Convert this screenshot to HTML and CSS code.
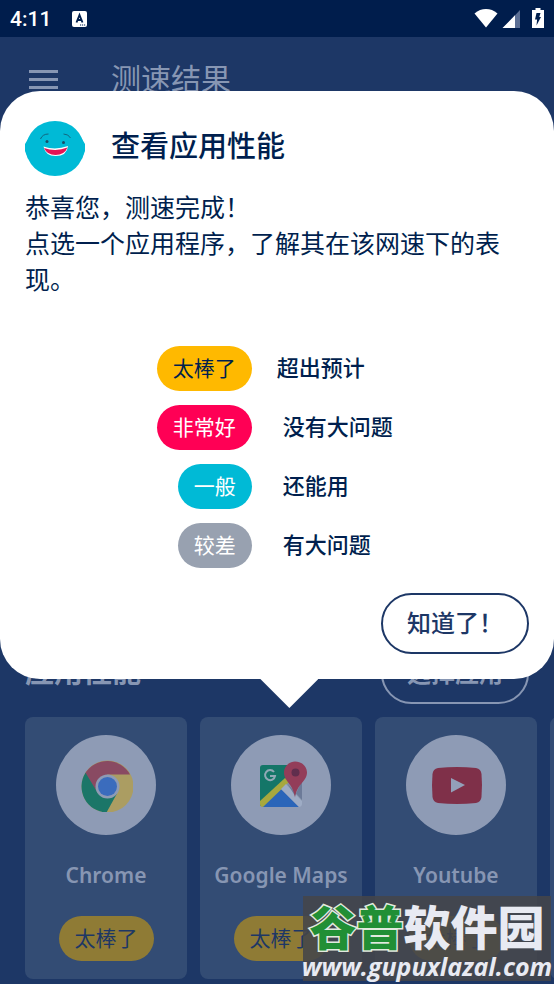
FILE: index.html
```html
<!DOCTYPE html>
<html lang="zh-CN">
<head>
<meta charset="utf-8">
<meta name="viewport" content="width=device-width, initial-scale=1">
<title>测速结果</title>
<link rel="stylesheet" href="styles.css">
</head>
<body>
<div class="status-bar">
  <span class="clock">4:11</span>
  <svg class="status-app" viewBox="0 0 15 16" width="15" height="16" aria-hidden="true">
    <rect width="15" height="16" rx="2" fill="#fff"/>
    <path d="M4.500 11.500 7.500 4l3 7.500M5.600 9h3.800" fill="none" stroke="#001f4e" stroke-width="1.900"/>
    <path d="M8 14h1.200M10 14h1.200M12 14h1.200" stroke="#001f4e" stroke-width="1"/>
  </svg>
  <svg class="status-icons" viewBox="0 0 70 21" width="70" height="21" aria-hidden="true">
    <path d="M.5 5.500C4 2.200 8 1 12 1s8 1.200 11.500 4.500L12 19.500z" fill="#fff"/>
    <path d="M46 2v18H29z" fill="#5c6f94"/>
    <path d="M41 7.300V20H28.500z" fill="#fff"/>
    <path d="M61.500 0h5v2H70v18H58V2h3.500z" fill="#fff"/>
    <path d="M62.500 5h4l-1.200 4H67l-4.500 8.500.6-6H61z" fill="#001f4e"/>
  </svg>
</div>

<div class="app">
  <header class="app-bar">
    <button class="menu" type="button" aria-label="菜单">
      <svg viewBox="0 0 30 22" width="30" height="22" aria-hidden="true"><path d="M1 3.500h29M1 11.500h29M1 19.500h29" stroke="#8796b3" stroke-width="3"/></svg>
    </button>
    <h1 class="app-title">测速结果</h1>
  </header>

  <section class="apps">
    <div class="apps-head">
      <h2 class="apps-title">应用性能</h2>
      <button class="outline-button outline-button-dim" type="button">选择应用</button>
    </div>
    <ul class="cards">
      <li class="card">
        <span class="logo">
          <svg viewBox="-1.500 -1.500 54 54" width="54" height="54" aria-hidden="true">
            <circle cx="27" cy="27" r="26" fill="#ab9d62"/>
            <path d="M4.500 14A26 26 0 0 1 49.500 15H27L16.600 33z" fill="#894a62"/>
            <path d="M5 13.200A26 26 0 0 0 26 53L36.500 34 17 33z" fill="#1b7668"/>
            <circle cx="27" cy="27" r="12" fill="#8e9bb5"/>
            <circle cx="27" cy="27" r="9.500" fill="#3b6cbd"/>
          </svg>
        </span>
        <span class="card-name">Chrome</span>
        <span class="pill pill-dim">太棒了</span>
      </li>
      <li class="card">
        <span class="logo">
          <svg viewBox="0 0 54 54" width="54" height="54" aria-hidden="true">
            <rect x="6" y="7" width="42" height="42" rx="3" fill="#8693aa"/>
            <path d="M9 7h28v12L6 48V10a3 3 0 0 1 3-3z" fill="#147668"/>
            <path d="m8 48 19-17 18 18H9z" fill="#2a65b9"/>
            <path d="M6 43 31 20l5 3L9 49Q6 49 6 46z" fill="#a7a83e"/>
            <path d="m27 31 5-5 16 17v3q0 3-3 3z" fill="#9eacc5"/>
            <path d="m33 25 8 13 7-16v20z" fill="#6c7a98"/>
            <path d="M41 3.500c-6 0-11 5-11 11 0 9 9 11 11 25 2-14 12-16 12-25 0-6-5-11-12-11z" fill="#933d59"/>
            <circle cx="41.500" cy="14.500" r="4" fill="#602e4d"/>
            <path d="M20 14a5 5 0 1 0 1 4h-5" fill="none" stroke="#91a9b6" stroke-width="2"/>
          </svg>
        </span>
        <span class="card-name">Google Maps</span>
        <span class="pill pill-dim">太棒了</span>
      </li>
      <li class="card">
        <span class="logo">
          <svg viewBox="-1 -1 54 54" width="54" height="54" aria-hidden="true">
            <path d="M8 9q19-2 38 0 5 1 5.500 6 1 11 0 23-.5 5-5.500 6-19 2-38 0-5-1-5.500-6-1-12 0-23 .5-5 5.500-6z" fill="#7f3049"/>
            <path d="m21 19 14 7-14 7.500z" fill="#93a0b9"/>
          </svg>
        </span>
        <span class="card-name">Youtube</span>
        <span class="pill pill-dim">太棒了</span>
      </li>
      <li class="card"></li>
    </ul>
  </section>

  <div class="dialog" role="dialog" aria-labelledby="dialog-title">
    <div class="dialog-head">
      <svg viewBox="0 0 60 55" width="60" height="55" aria-hidden="true">
        <ellipse cx="30" cy="27.500" rx="29" ry="27.500" fill="#00bad6"/>
        <path d="M3 18 0 23v7l3 8h54l3-8v-7l-3-5z" fill="#00bad6"/>
        <path d="M15.500 18q2-5 8-5M38.500 13q5 0 7 4" fill="none" stroke="#12677f" stroke-width="1"/>
        <circle cx="22" cy="20.500" r="1.500" fill="#174e69"/>
        <circle cx="38.500" cy="21.500" r="1.500" fill="#174e69"/>
        <path d="M18.500 25.500q12 4 24.500-.5-1 10-12.500 10-10 0-12-9.500z" fill="#fff"/>
        <path d="M19 27q12 4 23.500-.5-3 7.500-12 7.500-8.500 0-11.500-7z" fill="#e71354"/>
      </svg>
      <h2 class="dialog-title" id="dialog-title">查看应用性能</h2>
    </div>
    <p class="dialog-text">恭喜您，测速完成！<br>点选一个应用程序，了解其在该网速下的表现。</p>
    <dl class="legend">
      <dt class="pill pill-great">太棒了</dt><dd class="meaning meaning-wide">超出预计</dd>
      <dt class="pill pill-good">非常好</dt><dd class="meaning">没有大问题</dd>
      <dt class="pill pill-fair">一般</dt><dd class="meaning">还能用</dd>
      <dt class="pill pill-poor">较差</dt><dd class="meaning">有大问题</dd>
    </dl>
    <button class="outline-button" type="button">知道了！</button>
  </div>
</div>

<div class="watermark">
  <span class="mark-name"><span class="mark-green">谷普</span>软件园</span>
  <span class="mark-url">www.gupuxlazal.com</span>
</div>
</body>
</html>
```

FILE: styles.css
```css
* {
  box-sizing: border-box;
}

body {
  position: relative;
  display: flex;
  flex-direction: column;
  min-height: 100vh;
  margin: 0;
  overflow-x: hidden;
  background: #1d3766;
  color: #001f4e;
  font-family: "Noto Sans", "Noto Sans CJK SC", sans-serif;
}

h1, h2, p, ul, dl, dd {
  margin: 0;
  padding: 0;
}

button {
  font-family: inherit;
  background: none;
}

.status-bar {
  display: flex;
  align-items: center;
  height: 37px;
  padding: 0 10px;
  background: #001d4c;
  color: #fff;
}

.clock {
  font: 500 21px/25px Roboto, sans-serif;
  padding-top: 2px;
}

.status-app {
  margin-left: 21px;
}

.status-icons {
  margin-left: auto;
}

.app {
  position: relative;
  display: flex;
  flex: 1;
  flex-direction: column;
  justify-content: space-between;
}

.app-bar {
  display: flex;
  align-items: center;
  gap: 53px;
  height: 84px;
  padding: 0 28px;
}

.menu {
  display: flex;
  padding: 0;
  border: 0;
}

.app-title {
  color: #8796b3;
  font-size: 30px;
  font-weight: 400;
  line-height: 40px;
}

.apps {
  padding: 0 0 5px 25px;
  overflow: hidden;
}

.apps-head {
  display: flex;
  align-items: flex-start;
  justify-content: space-between;
  margin-bottom: 13px;
  padding-right: 25px;
}

.apps-title {
  color: #8796b3;
  font-size: 29px;
  font-weight: 700;
  line-height: 58px;
}

.outline-button {
  height: 61px;
  padding: 0 24px 4px;
  border: 2px solid #1d3766;
  border-radius: 31px;
  color: #1d3766;
  font-size: 24px;
  font-weight: 500;
}

.outline-button-dim {
  border-color: #8796b3;
  color: #8796b3;
  font-weight: 700;
}

.cards {
  display: flex;
  gap: 13px;
  list-style: none;
}

.card {
  display: flex;
  flex: 0 0 162px;
  flex-direction: column;
  align-items: center;
  padding: 18px 0;
  border-radius: 8px;
  background: #334c74;
}

.logo {
  display: flex;
  align-items: center;
  justify-content: center;
  width: 100px;
  height: 100px;
  border-radius: 50%;
  background: #8e9bb5;
}

.card-name {
  margin: 25px 0;
  color: #8796b3;
  font-size: 21px;
  font-weight: 600;
  line-height: 31px;
}

.pill {
  padding: 0 16px;
  border-radius: 23px;
  color: #fff;
  font-size: 21px;
  line-height: 45px;
}

.pill-dim {
  background: #8f7b35;
  color: #1d3766;
}

.pill-great {
  background: #ffb900;
  color: #001f4e;
}

.pill-good {
  background: #ff0055;
}

.pill-fair {
  background: #00bad6;
}

.pill-poor {
  background: #98a1b0;
}

.dialog {
  position: absolute;
  top: 54px;
  right: 0;
  left: 0;
  display: flex;
  flex-direction: column;
  padding: 30px 25px 25px;
  border-radius: 40px;
  background: #fff;
}

.dialog::after {
  position: absolute;
  top: 100%;
  left: 47%;
  width: 58px;
  height: 29px;
  background: #fff;
  clip-path: polygon(0 0, 100% 0, 50% 100%);
  content: "";
}

.dialog-head {
  display: flex;
  align-items: flex-start;
  gap: 26px;
}

.dialog-title {
  font-size: 29px;
  font-weight: 500;
  line-height: 50px;
}

.dialog-text {
  margin-top: 13px;
  padding-right: 24px;
  font-size: 25px;
  line-height: 36px;
}

.legend {
  display: grid;
  grid-template-columns: 45% 1fr;
  row-gap: 14px;
  margin: 49px 0 25px;
}

.legend .pill {
  justify-self: end;
}

.meaning {
  padding-left: 31px;
  font-size: 22px;
  font-weight: 500;
  line-height: 42px;
}

.meaning-wide {
  padding-left: 25px;
}

.dialog .outline-button {
  align-self: flex-end;
}

.watermark {
  position: absolute;
  right: 3px;
  bottom: 3px;
  display: flex;
  flex-direction: column;
  align-items: center;
  width: 248px;
  padding-top: 7px;
  background: rgba(68, 70, 74, 0.88);
  color: #e8eaf2;
  white-space: nowrap;
}

.mark-name {
  font-size: 47px;
  font-weight: 900;
  line-height: 48px;
}

.mark-green {
  color: #218f35;
  -webkit-text-stroke: 3px #e2eadf;
  paint-order: stroke fill;
}

.mark-url {
  font: italic 700 25px/30px "Open Sans", sans-serif;
}
```
